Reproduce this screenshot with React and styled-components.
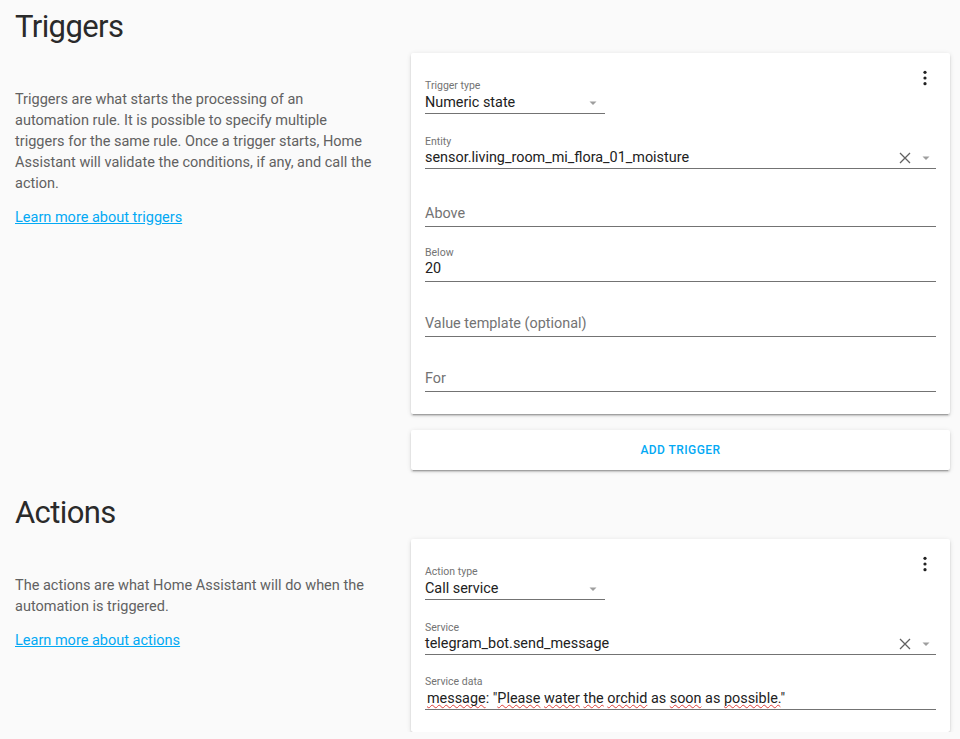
import React from 'react';
import styled, { createGlobalStyle } from 'styled-components';

const GlobalStyle = createGlobalStyle`
  html, body {
    margin: 0;
    padding: 0;
    background: #fafafa;
  }
  body {
    font-family: Roboto, "Noto Sans", sans-serif;
    overflow: hidden;
    -webkit-font-smoothing: antialiased;
  }
`;

const Page = styled.div`
  display: flex;
  flex-direction: column;
  gap: 23px;
  padding: 7px 10px 0 15px;
`;

const Header = styled.h1`
  margin: 0 0 6px;
  font-size: 31px;
  line-height: 40px;
  font-weight: 400;
  letter-spacing: -0.6px;
  color: #2a2a2a;
`;

const Row = styled.div`
  display: grid;
  grid-template-columns: 357px 1fr;
  column-gap: 39px;
  align-items: start;
`;

const Intro = styled.div`
  padding-top: 36px;
  font-size: 14.5px;
  line-height: 21px;
  color: #616161;
`;

const IntroText = styled.p`
  margin: 0 0 13px;
`;

const Link = styled.a`
  color: #03a9f4;
  text-decoration: underline;
  cursor: pointer;
`;

const Cards = styled.div`
  display: flex;
  flex-direction: column;
  gap: 16px;
`;

const Card = styled.div`
  position: relative;
  background: #fff;
  border-radius: 2px;
  box-shadow: 0 2px 2px 0 rgba(0, 0, 0, 0.14), 0 1px 5px 0 rgba(0, 0, 0, 0.12),
    0 3px 1px -2px rgba(0, 0, 0, 0.2);
  padding: 26px 14px 22px;
`;

const ButtonCard = styled(Card)`
  padding: 0;
`;

const FlatButton = styled.button`
  display: block;
  width: 100%;
  height: 40px;
  border: none;
  background: transparent;
  font-family: Roboto, "Noto Sans", sans-serif;
  font-size: 12px;
  font-weight: 500;
  letter-spacing: 0.45px;
  text-transform: uppercase;
  color: #03a9f4;
  cursor: pointer;
`;

const MenuButton = styled.div`
  position: absolute;
  top: 17px;
  right: 23px;
  display: flex;
`;

const Field = styled.div`
  width: ${(p) => p.$width || '100%'};
  margin-top: ${(p) => p.$top || 0}px;
`;

const Label = styled.div`
  height: 13px;
  font-size: 10.5px;
  line-height: 13px;
  color: #737373;
`;

const Control = styled.div`
  display: flex;
  align-items: center;
  height: ${(p) => p.$h}px;
  line-height: ${(p) => p.$h}px;
  padding-bottom: ${(p) => p.$pb || 0}px;
  border-bottom: 1px solid #737373;
  font-size: 14.4px;
  color: ${(p) => (p.$placeholder ? '#737373' : '#212121')};
`;

const Value = styled.span`
  flex: 1;
  white-space: nowrap;
  padding-left: ${(p) => p.$indent || 0}px;
`;

const Icons = styled.div`
  display: flex;
  align-items: center;
  gap: 4px;
  padding-right: ${(p) => p.$pr || 2}px;
`;

const Misspelled = styled.span`
  text-decoration: underline wavy #e0403a;
  text-decoration-thickness: 1px;
  text-underline-offset: 1px;
  text-decoration-skip-ink: none;
`;

const Kebab = () => (
  <svg width="4" height="16" viewBox="0 0 4 16">
    <circle cx="2" cy="2.3" r="1.6" fill="#212121" />
    <circle cx="2" cy="8" r="1.6" fill="#212121" />
    <circle cx="2" cy="13.7" r="1.6" fill="#212121" />
  </svg>
);

const Arrow = () => (
  <svg width="16" height="10" viewBox="0 0 16 10">
    <polygon points="4.5,3.5 11.5,3.5 8,7" fill="#9e9e9e" />
  </svg>
);

const Clear = () => (
  <svg width="18" height="18" viewBox="0 0 18 18">
    <path d="M4 4 L14 14 M14 4 L4 14" stroke="#616161" strokeWidth="1.3" fill="none" />
  </svg>
);

const Dropdown = ({ label, value }) => (
  <Field $width="180px">
    <Label>{label}</Label>
    <Control $h={21}>
      <Value>{value}</Value>
      <Icons $pr={4}>
        <Arrow />
      </Icons>
    </Control>
  </Field>
);

const Picker = ({ label, value, top }) => (
  <Field $top={top}>
    <Label>{label}</Label>
    <Control $h={20}>
      <Value>{value}</Value>
      <Icons>
        <Clear />
        <Arrow />
      </Icons>
    </Control>
  </Field>
);

const Input = ({ label, value, top }) => (
  <Field $top={top}>
    <Label>{value ? label : ''}</Label>
    <Control $h={20} $pb={2} $placeholder={!value}>
      <Value>{value || label}</Value>
    </Control>
  </Field>
);

const serviceData = (
  <>
    <Misspelled>message</Misspelled>: "<Misspelled>Please</Misspelled>{' '}
    <Misspelled>water</Misspelled> <Misspelled>the</Misspelled>{' '}
    <Misspelled>orchid</Misspelled> as <Misspelled>soon</Misspelled> as{' '}
    <Misspelled>possible.</Misspelled>"
  </>
);

export default function App() {
  return (
    <>
      <GlobalStyle />
      <Page>
        <section>
          <Header>Triggers</Header>
          <Row>
            <Intro>
              <IntroText>
                Triggers are what starts the processing of an automation rule. It is possible
                to specify multiple triggers for the same rule. Once a trigger starts, Home
                Assistant will validate the conditions, if any, and call the action.
              </IntroText>
              <Link>Learn more about triggers</Link>
            </Intro>
            <Cards>
              <Card>
                <MenuButton>
                  <Kebab />
                </MenuButton>
                <Dropdown label="Trigger type" value="Numeric state" />
                <Picker label="Entity" value="sensor.living_room_mi_flora_01_moisture" top={21} />
                <Input label="Above" top={22} />
                <Input label="Below" value="20" top={19} />
                <Input label="Value template (optional)" top={19} />
                <Input label="For" top={19} />
              </Card>
              <ButtonCard>
                <FlatButton>Add trigger</FlatButton>
              </ButtonCard>
            </Cards>
          </Row>
        </section>
        <section>
          <Header>Actions</Header>
          <Row>
            <Intro>
              <IntroText>
                The actions are what Home Assistant will do when the automation is triggered.
              </IntroText>
              <Link>Learn more about actions</Link>
            </Intro>
            <Cards>
              <Card>
                <MenuButton>
                  <Kebab />
                </MenuButton>
                <Dropdown label="Action type" value="Call service" />
                <Picker label="Service" value="telegram_bot.send_message" top={21} />
                <Field $top={20}>
                  <Label>Service data</Label>
                  <Control $h={21}>
                    <Value $indent={2}>{serviceData}</Value>
                  </Control>
                </Field>
              </Card>
            </Cards>
          </Row>
        </section>
      </Page>
    </>
  );
}
